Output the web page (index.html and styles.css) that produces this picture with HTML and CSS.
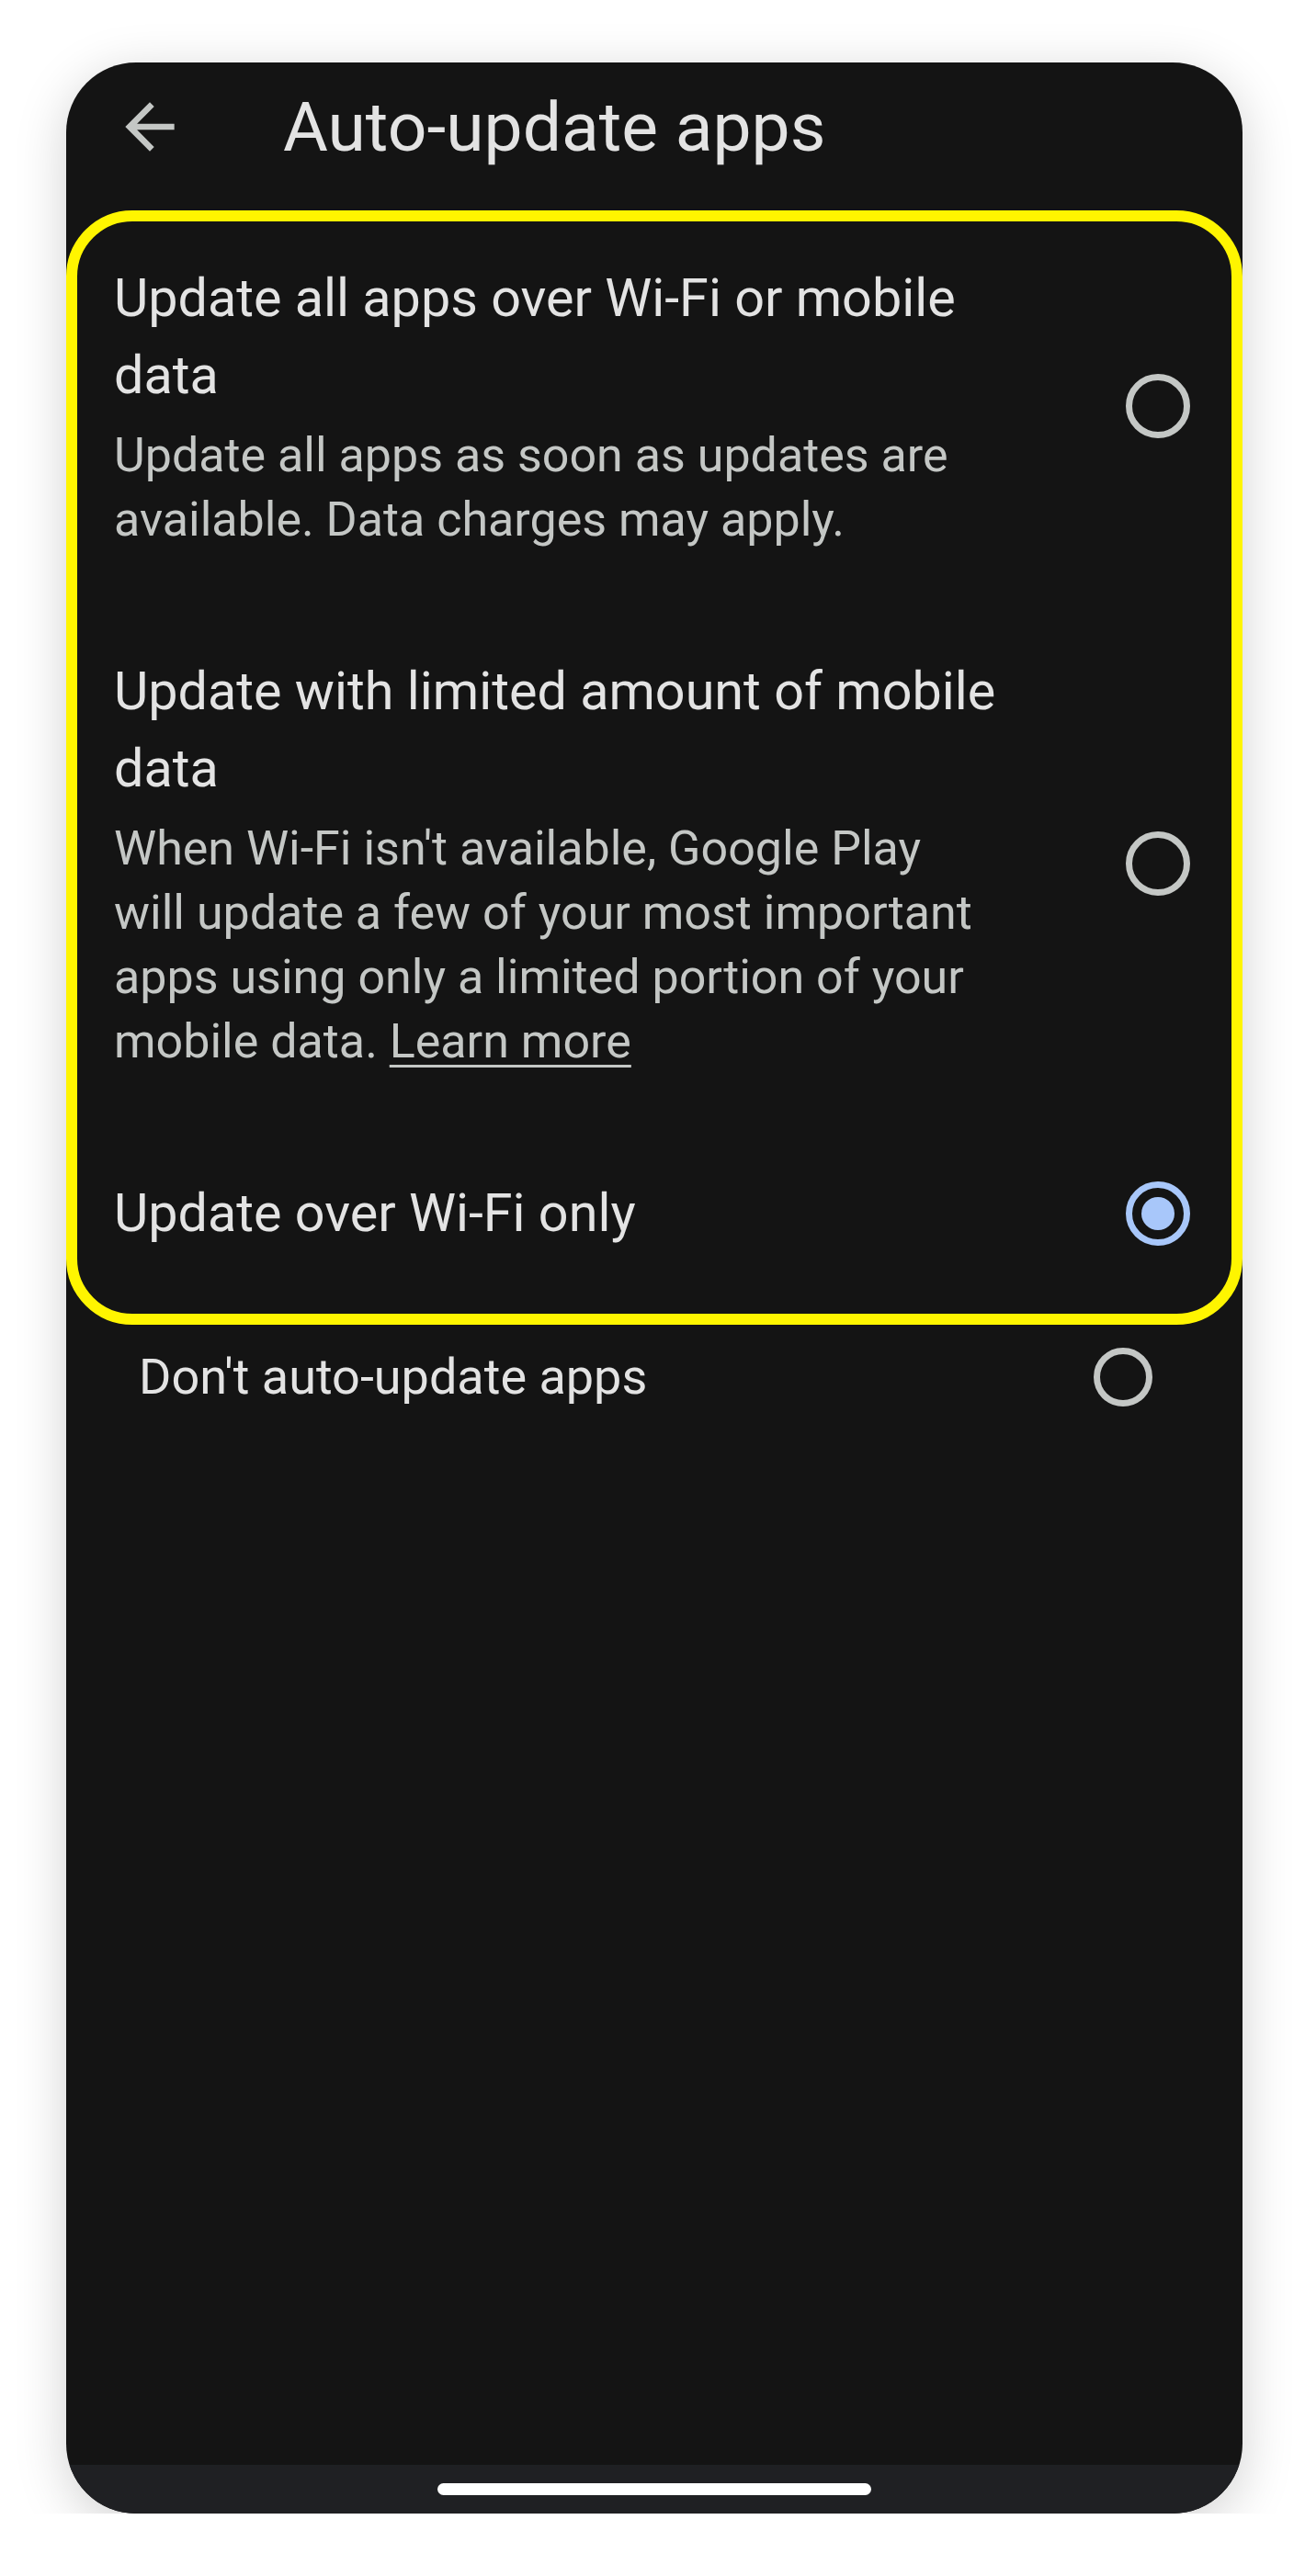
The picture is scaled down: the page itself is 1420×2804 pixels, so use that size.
FILE: index.html
```html
<!DOCTYPE html>
<html lang="en">

<head>
    <meta charset="UTF-8">
    <meta name="viewport" content="width=device-width, initial-scale=1.0">
    <title>Auto-update apps</title>
    <link rel="stylesheet" href="styles.css">
</head>

<body>
    <div class="phone">
        <div class="app-bar">
            <svg class="back" viewBox="0 0 24 24" width="80" height="80">
                <path d="M20 11H7.83l5.59-5.59L12 4l-8 8 8 8 1.41-1.41L7.83 13H20v-2z" fill="currentColor" />
            </svg>
            <h1 class="title">Auto-update apps</h1>
        </div>

        <div class="screen">
            <div class="highlight">
                <div class="option">
                    <div class="text">
                        <div class="label">Update all apps over Wi-Fi or mobile data</div>
                        <div class="desc">Update all apps as soon as updates are available. Data charges may apply.</div>
                    </div>
                    <span class="radio"></span>
                </div>
                <div class="option">
                    <div class="text">
                        <div class="label">Update with limited amount of mobile data</div>
                        <div class="desc">When Wi-Fi isn't available, Google Play will update a few of your most important apps using only a limited portion of your mobile data. <a href="#">Learn more</a></div>
                    </div>
                    <span class="radio"></span>
                </div>
                <div class="option">
                    <div class="text">
                        <div class="label">Update over Wi-Fi only</div>
                    </div>
                    <span class="radio checked"></span>
                </div>
            </div>

            <div class="option plain">
                <div class="text">
                    <div class="label">Don't auto-update apps</div>
                </div>
                <span class="radio"></span>
            </div>
        </div>

        <div class="nav-bar">
            <span class="pill"></span>
        </div>
    </div>
</body>

</html>
```

FILE: styles.css
```css
body {
    margin: 0;
    background: #ffffff;
    font-family: Roboto, "Noto Sans", sans-serif;
}

.phone {
    width: 1280px;
    height: 2668px;
    margin: 68px 0 0 72px;
    background: #141414;
    border-radius: 76px;
    box-shadow: 0 12px 56px rgba(0, 0, 0, 0.18);
    display: flex;
    flex-direction: column;
    overflow: hidden;
}

.app-bar {
    height: 140px;
    margin-bottom: 21px;
    display: flex;
    align-items: center;
    color: #e3e3e3;
}

.back {
    margin-left: 51px;
    color: #c4c7c5;
    flex-shrink: 0;
}

.title {
    margin: 0 0 0 105px;
    font-size: 75px;
    font-weight: 400;
    color: #e3e3e3;
}

.screen {
    flex: 1;
}

.highlight {
    border: 12px solid #fff500;
    border-radius: 72px;
}

.option {
    display: flex;
    align-items: center;
    padding: 42px 45px 68px 40px;
}

.option:last-child {
    padding-bottom: 67px;
}

.text {
    width: 1000px;
}

.label {
    font-size: 57.5px;
    line-height: 84px;
    color: #e3e3e3;
}

.desc {
    max-width: 945px;
    margin-top: 10px;
    font-size: 52px;
    line-height: 70px;
    color: #c4c7c5;
}

.desc a {
    color: #c4c7c5;
    text-decoration: underline;
    text-underline-offset: 8px;
    text-decoration-thickness: 3px;
}

.radio {
    margin-left: auto;
    width: 56px;
    height: 56px;
    border: 7px solid #c4c7c5;
    border-radius: 50%;
    flex-shrink: 0;
    position: relative;
}

.radio.checked {
    border-color: #a8c7fa;
}

.radio.checked::after {
    content: "";
    position: absolute;
    top: 10px;
    left: 10px;
    width: 36px;
    height: 36px;
    border-radius: 50%;
    background: #a8c7fa;
}

.option.plain {
    padding: 21px 98px 26px 79px;
}

.option.plain .label {
    font-size: 54px;
    line-height: 72px;
}

.option.plain .radio {
    width: 50px;
    height: 50px;
}

.nav-bar {
    height: 53px;
    background: #1f2023;
    display: flex;
    justify-content: center;
}

.pill {
    width: 472px;
    height: 13px;
    margin-top: 20px;
    border-radius: 7px;
    background: #ffffff;
}
```
